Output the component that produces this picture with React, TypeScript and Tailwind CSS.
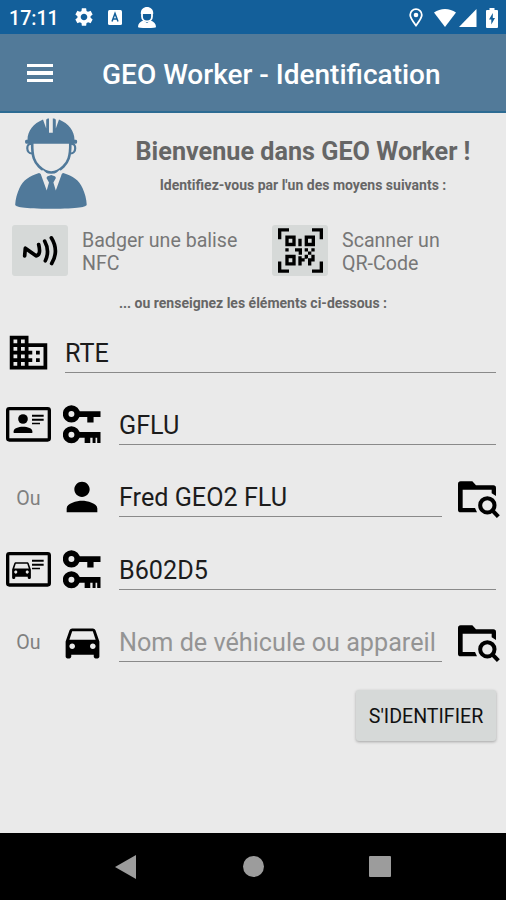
import type { ReactNode } from 'react';
import { MdBusiness, MdDirectionsCar, MdPerson, MdSettings } from 'react-icons/md';

interface IconProps {
  className?: string;
}

const WorkerIcon = ({ className }: IconProps) => (
  <svg viewBox="0 0 72 91" className={className} fill="currentColor">
    {/* helmet */}
    <path d="M12.500 21.800C12.500 13 18.500 5.500 28 1.500L31.200 10.500V2Q31.200 .4 33 .4H34V14.800H37.800V.4H39Q40.800 .4 40.800 2V10.500L44 1.500C53.500 5.500 59.500 13 59.500 21.800H61Q62.200 21.800 62.200 23.800T61 25.800H11.300Q10 25.800 10 23.800T11.300 21.800Z" />
    {/* face and ears */}
    <path d="M17.200 25C17 39 19.500 44 24 48.500C28.500 53 33 54.500 36.200 54.500S44 53 48.500 48.500C53 44 55.500 39 55.300 25" fill="none" stroke="currentColor" strokeWidth="2.600" />
    <path d="M16.500 26C10.800 24.500 10.800 35.500 17 35.500M56 26C61.700 24.500 61.700 35.500 55.500 35.500" fill="none" stroke="currentColor" strokeWidth="2.200" />
    {/* suit, collar and tie */}
    <path d="M24 55L32 58.500L36.200 57L40.500 58.500L48.300 55C58 58 64 62 67.500 70C70 75.500 71.500 81 71.700 86.500C71.700 89 64 90.800 36 90.800S.2 89 .2 86.500C.5 81 2 75.500 4.500 70C8 62 14.500 58 24 55Z" />
    <path d="M25 54L31.700 72.500L34 64.500L31.500 60L33 56.500L28 52ZM47.500 54L40.800 72.500L38.400 64.500L40.900 60L39.500 56.500L44.500 52Z" fill="#eaeaea" />
  </svg>
);

const NfcIcon = ({ className }: IconProps) => (
  <svg viewBox="36 40 168 152" className={className} fill="none" stroke="currentColor" strokeWidth="11" strokeLinecap="round" strokeLinejoin="round">
    <path d="M74 132L76 109L108 132Q124 130 116 98M134 88Q150 117 136 147M154 78Q178 117 155 155" />
  </svg>
);

const QrIcon = ({ className }: IconProps) => (
  <svg viewBox="24 20 135 134" className={className} fill="currentColor">
    <path d="M29 53V25H57M126 25H154V53M154 120V149H126M57 149H29V120" fill="none" stroke="currentColor" strokeWidth="10" />
    <path fillRule="evenodd" d="M46 42H77V74H46ZM56 52V64H67V52ZM104 42H135V74H104ZM114 52V64H125V52ZM46 100H77V132H46ZM56 110V122H67V110Z" />
    <path d="M85 52H95V74H85ZM46 80H56V90H46ZM75 80H96V100H86V90H75ZM104 80H114V90H104ZM124 80H134V90H124ZM114 90H124V100H114ZM104 100H114V110H104ZM124 100H134V110H124ZM94 110H104V120H94ZM114 110H124V120H114ZM85 104H95V110H104V120H95V132H85ZM104 104H112V112H104ZM124 110H134V120H124ZM114 120H124V132H114Z" />
  </svg>
);

const CardIcon = ({ className, children }: IconProps & { children: ReactNode }) => (
  <svg viewBox="6 20 135 104" className={className} fill="currentColor">
    <rect x="11" y="25" width="125" height="94" rx="5" fill="none" stroke="currentColor" strokeWidth="10" />
    <path d="M84 43H119V49H84ZM84 55H119V61H84ZM84 67H108V72H84Z" />
    {children}
  </svg>
);

const KeysIcon = ({ className }: IconProps) => (
  <svg viewBox="178 14 114 118" className={className} fill="currentColor">
    <g fill="none" stroke="currentColor" strokeWidth="17">
      <circle cx="203" cy="41" r="17.500" />
      <circle cx="203" cy="104" r="17.500" />
    </g>
    <path d="M224 33H291V50H270V67H251V50H224ZM224 96H291V129H281V113H276V129H267V113H260V129H243V113H224Z" />
  </svg>
);

const FolderSearchIcon = ({ className }: IconProps) => (
  <svg viewBox="84 78 126 113" className={className} fill="none" stroke="currentColor">
    <path fill="currentColor" stroke="none" d="M84 87Q84 79 92 79H127L138 91H190Q198 91 198 99V123L185 115V104H98V159H135L141 172H92Q84 172 84 164Z" />
    <circle cx="172" cy="151" r="21.500" strokeWidth="12" />
    <path d="M187 166L205 185" strokeWidth="12" />
  </svg>
);

const StatusBar = () => (
  <div className="flex h-[34px] items-center bg-[#135f9a] pl-[9px] pr-[8px] text-white">
    <span className="w-[50px] pt-[3px] text-[19.600px] font-medium leading-none">17:11</span>
    <MdSettings className="ml-[14px] size-[22px]" />
    <svg viewBox="0 0 14 15" className="ml-[13px] mt-px h-[15px] w-[14px]">
      <rect width="14" height="15" rx="1.500" fill="#fff" />
      <path d="M4 11.500L7 3.500L10 11.500M5 9H9" fill="none" stroke="#135f9a" strokeWidth="1.500" />
    </svg>
    <svg viewBox="0 0 18 21" className="ml-[15.500px] mt-px h-[21px] w-[18px]" fill="#fff">
      <path d="M2.800 6C2.800 2.500 5.500 0 9 0S15.200 2.500 15.200 6V7H2.800Z" />
      <path d="M4 7V9.500C4 16 14 16 14 9.500V7" fill="none" stroke="#fff" strokeWidth="1.800" />
      <path d="M5.500 13.500L9 16L12.500 13.500C16 14.500 18 17 18 20Q18 21 9 21T0 20C0 17 2 14.500 5.500 13.500Z" />
    </svg>
    <div className="ml-auto flex items-center pt-px">
      <svg viewBox="0 0 14 19" className="h-[19px] w-[14px]">
        <path d="M7 17.500C4 13.500 1.200 10 1.200 7A5.800 5.800 0 0 1 12.800 7C12.800 10 10 13.500 7 17.500Z" fill="none" stroke="#fff" strokeWidth="1.800" />
        <circle cx="7" cy="7" r="2.300" fill="#fff" />
      </svg>
      <svg viewBox="0 0 22 18" className="ml-[11px] h-[18px] w-[22px]" fill="#fff">
        <path d="M11 18L0 3.500Q5 0 11 0T22 3.500Z" />
      </svg>
      <svg viewBox="0 0 18 18" className="ml-[3px] h-[18px] w-[18px]" fill="#fff">
        <path d="M0 18L17.500 0V18Z" />
      </svg>
      <svg viewBox="0 0 12 20" className="ml-[9px] h-5 w-3" fill="#fff">
        <path d="M3.500 2V0H8.500V2H11Q12 2 12 3V19Q12 20 11 20H1Q0 20 0 19V3Q0 2 1 2Z" />
        <path d="M6.800 5L3 11.500H5.300V16.500L9 10H6.800Z" fill="#135f9a" />
      </svg>
    </div>
  </div>
);

interface FormRowProps {
  lead: ReactNode;
  icon?: ReactNode;
  value?: string;
  placeholder?: string;
  search?: boolean;
}

const FormRow = ({ lead, icon, value, placeholder, search }: FormRowProps) => (
  <div className="flex h-[72.200px] items-center pr-[10px]">
    <div className="flex w-[57px] shrink-0 justify-center text-[19.600px] text-[#808080]">{lead}</div>
    {icon && <div className="mr-1 flex w-[50px] shrink-0 justify-center text-black">{icon}</div>}
    <div className="ml-2 flex h-10 flex-1 items-center whitespace-nowrap border-b border-[#8a8a8a] pt-0.5 text-[25.200px] leading-none">
      {value ? <span className="text-[#1c1c1c]">{value}</span> : <span className="text-[#949494]">{placeholder}</span>}
    </div>
    {search && <FolderSearchIcon className="-mr-1 ml-4 mt-1 h-[37.700px] w-[42px] shrink-0 text-black" />}
  </div>
);

export default function App() {
  return (
    <div className="flex h-[900px] w-[506px] flex-col overflow-hidden bg-[#eaeaea] font-['Roboto',sans-serif]">
      <StatusBar />

      <header className="flex h-[79px] items-center border-b-2 border-[#2d6b93] bg-[#527a99] pl-[26.500px] text-white">
        <div className="mt-px flex w-[26.500px] flex-col gap-[4.500px]">
          <span className="h-[3.300px] bg-white" />
          <span className="h-[3.300px] bg-white" />
          <span className="h-[3.300px] bg-white" />
        </div>
        <h1 className="ml-[49px] mt-[5px] text-[28px] font-medium leading-none">GEO Worker - Identification</h1>
      </header>

      <main className="flex-1">
        <section className="flex h-[99px] pl-[15px] pt-[5px]">
          <WorkerIcon className="h-[91px] w-[72px] text-[#50799a]" />
          <div className="ml-[13px] flex-1 pt-[20px] text-center">
            <h2 className="text-[25.200px] font-bold leading-[28px] text-[#666]">Bienvenue dans GEO Worker !</h2>
            <p className="mt-[10px] text-[14px] font-bold leading-[18px] text-[#666]">Identifiez-vous par l'un des moyens suivants :</p>
          </div>
        </section>

        <section className="flex h-[78px] pl-3 pt-[13px] text-[19.600px] leading-[23px] text-[#777]">
          <div className="flex w-[260px]">
            <button className="flex h-[51px] w-14 rounded-[3px] bg-[#d6d9d8] text-black">
              <NfcIcon className="h-[51px] w-14" />
            </button>
            <p className="ml-[14px] mt-1 w-[170px]">Badger une balise NFC</p>
          </div>
          <div className="flex">
            <button className="flex h-[51px] w-14 items-center justify-center rounded-[3px] bg-[#d6d9d8] text-black">
              <QrIcon className="h-[45px] w-[45px]" />
            </button>
            <p className="ml-[14px] mt-1 w-[110px]">Scanner un QR-Code</p>
          </div>
        </section>

        <p className="h-[27px] pt-1 text-center text-[14px] font-bold leading-[18px] text-[#666]">... ou renseignez les éléments ci-dessous :</p>

        <section>
          <FormRow lead={<MdBusiness className="-mt-px size-[45px] text-black" />} value="RTE" />
          <FormRow
            lead={
              <CardIcon className="-mt-px h-[34.700px] w-[45px] text-black">
                <circle cx="57" cy="56" r="14.500" />
                <path d="M29 98V93C29 75 85 75 85 93V98Z" />
              </CardIcon>
            }
            icon={<KeysIcon className="-mt-px h-[39px] w-[38px]" />}
            value="GFLU"
          />
          <FormRow lead={<span className="pt-0.5">Ou</span>} icon={<MdPerson className="size-[46px]" />} value="Fred GEO2 FLU" search />
          <FormRow
            lead={
              <CardIcon className="h-[34.700px] w-[45px] text-black">
                <MdDirectionsCar x="15" y="35" size="75" />
              </CardIcon>
            }
            icon={<KeysIcon className="h-[39px] w-[38px]" />}
            value="B602D5"
          />
          <FormRow lead={<span className="pt-0.5">Ou</span>} icon={<MdDirectionsCar className="size-[45px]" />} placeholder="Nom de véhicule ou appareil" search />
        </section>

        <div className="flex justify-end pr-[10px] pt-3">
          <button className="h-[51px] w-[140px] rounded-[3px] bg-[#d6d9d8] pt-0.5 text-[19.600px] text-[#111] shadow-[0_1px_3px_rgba(0,0,0,0.3)]">S'IDENTIFIER</button>
        </div>
      </main>

      <nav className="flex h-[67px] items-center bg-black pl-[115px] text-[#9c9c9c]">
        <svg viewBox="0 0 21 24" className="h-6 w-[21px]" fill="currentColor">
          <path d="M0 12L21 0V24Z" />
        </svg>
        <span className="ml-[107px] size-[21px] rounded-full bg-[#9c9c9c]" />
        <span className="ml-[105px] size-[21.500px] rounded-[1px] bg-[#9c9c9c]" />
      </nav>
    </div>
  );
}
